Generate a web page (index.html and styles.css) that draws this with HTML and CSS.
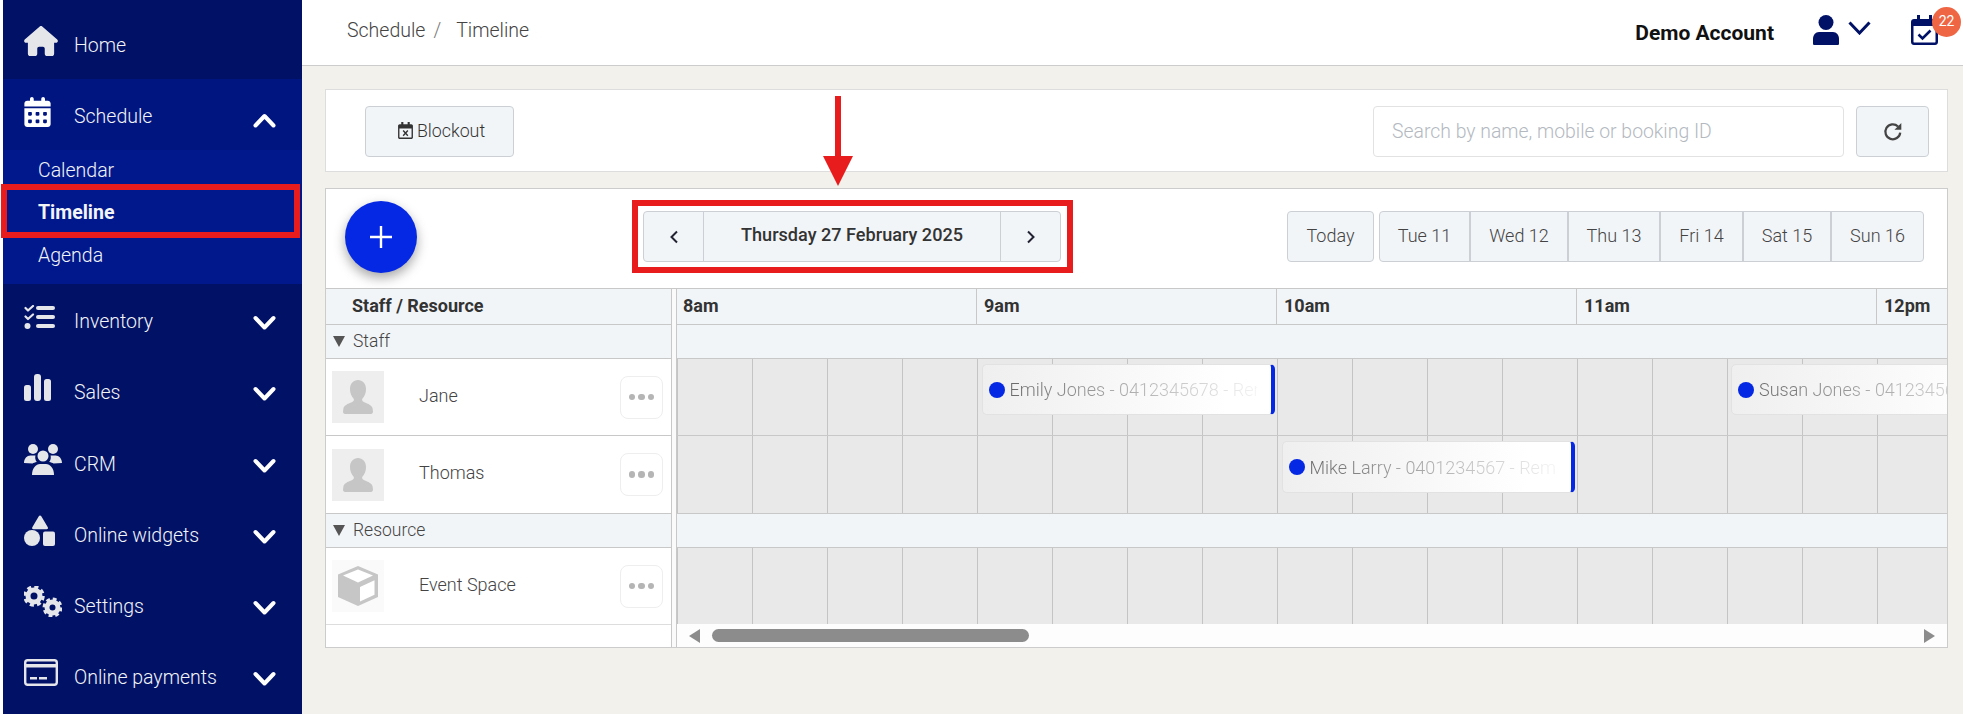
FILE: index.html
```html
<!DOCTYPE html>
<html lang="en">
<head>
<meta charset="utf-8">
<title>Schedule / Timeline</title>
<link rel="stylesheet" href="styles.css">
</head>
<body>
<aside class="sidebar">
  <a class="nav-row nav-home">
    <span class="nav-icon"><svg width="34" height="30" viewBox="0 0 576 512"><path fill="#e4e6ea" d="M575.8 255.5c0 18-15 32.1-32 32.1h-32l.7 160.2c0 2.7-.2 5.4-.5 8.1V472c0 22.1-17.9 40-40 40H456c-1.1 0-2.2 0-3.3-.1c-1.4 .1-2.8 .1-4.2 .1H416 392c-22.1 0-40-17.9-40-40V448 384c0-17.7-14.3-32-32-32H256c-17.7 0-32 14.3-32 32v64 24c0 22.1-17.9 40-40 40H160 128.1c-1.5 0-3-.1-4.5-.2c-1.2 .1-2.4 .2-3.6 .2H104c-22.1 0-40-17.9-40-40V360c0-.9 0-1.9 .1-2.8V287.6H32c-18 0-32-14-32-32.1c0-9 3-17 10-24L266.4 8c7-7 15-8 22-8s15 2 21 7L564.8 231.5c8 7 12 15 11 24z"/></svg></span>
    <span class="nav-label">Home</span>
  </a>
  <a class="nav-row nav-open">
    <span class="nav-icon"><svg width="27" height="30" viewBox="0 0 448 512"><path fill="#fff" d="M128 0c17.7 0 32 14.3 32 32V64H288V32c0-17.7 14.3-32 32-32s32 14.3 32 32V64h48c26.5 0 48 21.5 48 48v48H0V112C0 85.5 21.5 64 48 64H96V32c0-17.7 14.3-32 32-32zM0 192H448V464c0 26.5-21.5 48-48 48H48c-26.5 0-48-21.5-48-48V192zm64 80v32c0 8.8 7.2 16 16 16h32c8.8 0 16-7.2 16-16V272c0-8.8-7.2-16-16-16H80c-8.8 0-16 7.2-16 16zm128 0v32c0 8.8 7.2 16 16 16h32c8.8 0 16-7.2 16-16V272c0-8.8-7.2-16-16-16H208c-8.8 0-16 7.2-16 16zm144-16c-8.8 0-16 7.2-16 16v32c0 8.8 7.2 16 16 16h32c8.8 0 16-7.2 16-16V272c0-8.8-7.2-16-16-16H336zM64 400v32c0 8.8 7.2 16 16 16h32c8.8 0 16-7.2 16-16V400c0-8.8-7.2-16-16-16H80c-8.8 0-16 7.2-16 16zm144-16c-8.8 0-16 7.2-16 16v32c0 8.8 7.2 16 16 16h32c8.8 0 16-7.2 16-16V400c0-8.8-7.2-16-16-16H208zm112 16v32c0 8.8 7.2 16 16 16h32c8.8 0 16-7.2 16-16V400c0-8.8-7.2-16-16-16H336c-8.8 0-16 7.2-16 16z"/></svg></span>
    <span class="nav-label">Schedule</span>
    <svg class="nav-chev nav-chev-up" width="23" height="15" viewBox="0 0 23 15"><polyline points="2.5,12.5 11.5,3 20.5,12.5" fill="none" stroke="#fff" stroke-width="4" stroke-linecap="round" stroke-linejoin="round"/></svg>
  </a>
  <div class="subnav">
    <a class="sub-item">Calendar</a>
    <a class="sub-item sub-active">Timeline<span class="mark-box mark-nav"></span></a>
    <a class="sub-item">Agenda</a>
  </div>
  <a class="nav-row">
    <span class="nav-icon"><svg width="31" height="24" viewBox="0 0 31 24"><g fill="#e4e6ea"><rect x="12" y="1" width="19" height="4" rx="2"/><rect x="12" y="10" width="19" height="4" rx="2"/><rect x="12" y="19" width="19" height="4" rx="2"/><circle cx="3.5" cy="21" r="3"/></g><g fill="none" stroke="#e4e6ea" stroke-width="2.2" stroke-linecap="round" stroke-linejoin="round"><polyline points="1.5,3 4,5.5 9,1"/><polyline points="1.5,11.5 4,14 9,9.5"/></g></svg></span>
    <span class="nav-label">Inventory</span>
    <svg class="nav-chev" width="23" height="15" viewBox="0 0 23 15"><polyline points="2.5,3 11.5,12.5 20.5,3" fill="none" stroke="#fff" stroke-width="4" stroke-linecap="round" stroke-linejoin="round"/></svg>
  </a>
  <a class="nav-row">
    <span class="nav-icon"><svg width="27" height="27" viewBox="0 0 27 27"><g fill="#e4e6ea"><rect x="0" y="11" width="7" height="16" rx="2.5"/><rect x="10" y="0" width="7" height="27" rx="3"/><rect x="20" y="5" width="7" height="22" rx="2.5"/></g></svg></span>
    <span class="nav-label">Sales</span>
    <svg class="nav-chev" width="23" height="15" viewBox="0 0 23 15"><polyline points="2.5,3 11.5,12.5 20.5,3" fill="none" stroke="#fff" stroke-width="4" stroke-linecap="round" stroke-linejoin="round"/></svg>
  </a>
  <a class="nav-row">
    <span class="nav-icon"><svg width="38" height="31" viewBox="0 0 38 31"><g fill="#e4e6ea"><circle cx="9" cy="5" r="5"/><circle cx="29" cy="5" r="5"/><circle cx="19" cy="12" r="5.5"/><path d="M0 19c0-4.500 3-7.500 6.500-7.500h5c-.6 1.800-.3 4.600 1.300 6.500-2 .4-3.300 1-4.300 1.500z"/><path d="M38 19c0-4.500-3-7.500-6.500-7.500h-5c.6 1.800.3 4.600-1.300 6.500 2 .4 3.300 1 4.300 1.500z"/><path d="M8 31c0-7 4-11 8-11h6c4 0 8 4 8 11z"/></g></svg></span>
    <span class="nav-label">CRM</span>
    <svg class="nav-chev" width="23" height="15" viewBox="0 0 23 15"><polyline points="2.5,3 11.5,12.5 20.5,3" fill="none" stroke="#fff" stroke-width="4" stroke-linecap="round" stroke-linejoin="round"/></svg>
  </a>
  <a class="nav-row">
    <span class="nav-icon"><svg width="31" height="31" viewBox="0 0 31 31"><g fill="#e4e6ea"><path d="M16 0.500c.6 0 1 .3 1.300.8l6.500 11c.5 1 0 2-1.200 2H9.500c-1.200 0-1.700-1-1.200-2l6.500-11c.3-.5.700-.8 1.200-.8z"/><circle cx="8" cy="23" r="8"/><rect x="19" y="16.500" width="12" height="14.500" rx="2"/></g></svg></span>
    <span class="nav-label">Online widgets</span>
    <svg class="nav-chev" width="23" height="15" viewBox="0 0 23 15"><polyline points="2.5,3 11.5,12.5 20.5,3" fill="none" stroke="#fff" stroke-width="4" stroke-linecap="round" stroke-linejoin="round"/></svg>
  </a>
  <a class="nav-row">
    <span class="nav-icon"><svg width="38" height="31" viewBox="0 0 38 31"><g fill="none" stroke="#e4e6ea"><circle cx="10" cy="10" r="6" stroke-width="5"/><circle cx="10" cy="10" r="9" stroke-width="3.500" stroke-dasharray="4 3.070"/><circle cx="28.500" cy="21.500" r="5.500" stroke-width="5"/><circle cx="28.500" cy="21.500" r="8.300" stroke-width="3.300" stroke-dasharray="3.700 2.820"/></g></svg></span>
    <span class="nav-label">Settings</span>
    <svg class="nav-chev" width="23" height="15" viewBox="0 0 23 15"><polyline points="2.5,3 11.5,12.5 20.5,3" fill="none" stroke="#fff" stroke-width="4" stroke-linecap="round" stroke-linejoin="round"/></svg>
  </a>
  <a class="nav-row">
    <span class="nav-icon"><svg width="34" height="27" viewBox="0 0 34 27"><rect x="1.200" y="1.200" width="31.600" height="24.600" rx="2.500" fill="none" stroke="#e4e6ea" stroke-width="2.400"/><rect x="1" y="5" width="32" height="3.500" fill="#e4e6ea"/><rect x="6" y="18" width="7" height="2.500" fill="#e4e6ea"/><rect x="15" y="18" width="8" height="2.500" fill="#e4e6ea"/></svg></span>
    <span class="nav-label">Online payments</span>
    <svg class="nav-chev" width="23" height="15" viewBox="0 0 23 15"><polyline points="2.5,3 11.5,12.5 20.5,3" fill="none" stroke="#fff" stroke-width="4" stroke-linecap="round" stroke-linejoin="round"/></svg>
  </a>
</aside>

<div class="main">
  <header class="topbar">
    <nav class="crumbs"><span>Schedule</span><span class="crumb-sep">/</span><span>Timeline</span></nav>
    <strong class="account">Demo Account</strong>
    <svg class="user-icon" width="26" height="30" viewBox="0 0 26 30"><circle cx="13" cy="7.500" r="7.500" fill="#001166"/><path fill="#001166" d="M6 17h14c3.500 0 6 3 6 7v4.500c0 1-.6 1.500-1.500 1.500h-23c-.9 0-1.500-.5-1.500-1.500V24c0-4 2.500-7 6-7z"/></svg>
    <svg class="user-chev" width="23" height="14" viewBox="0 0 23 14"><polyline points="1.500,1.500 11.500,12 21.500,1.500" fill="none" stroke="#001166" stroke-width="3"/></svg>
    <div class="cal-alert">
      <svg width="27" height="30" viewBox="0 0 27 30"><path fill="#001166" d="M6 0h3v4h9V0h3v4h3c1.700 0 3 1.300 3 3v20c0 1.700-1.300 3-3 3H3c-1.700 0-3-1.300-3-3V7c0-1.700 1.300-3 3-3h3zM2.500 11v16c0 .3.200.5.500.5h21c.3 0 .5-.2.500-.5V11z"/><polyline points="7.500,19.500 11.500,23.500 19.500,15.500" fill="none" stroke="#001166" stroke-width="2.600"/></svg>
      <span class="badge">22</span>
    </div>
  </header>

  <main class="content">
    <section class="card toolbar">
      <button class="btn btn-blockout"><svg width="15" height="17" viewBox="0 0 14 16"><path fill="#333" d="M3 0h2v2h4V0h2v2h1.500C13.300 2 14 2.700 14 3.500v11c0 .8-.7 1.500-1.500 1.500h-11C.7 16 0 15.300 0 14.500v-11C0 2.700.7 2 1.500 2H3zM1.300 6v8.300c0 .2.200.4.400.4h10.600c.2 0 .4-.2.400-.4V6z"/><path d="M4.800 8l4.400 5M9.200 8l-4.400 5" stroke="#333" stroke-width="1.300"/></svg>Blockout</button>
      <div class="search">Search by name, mobile or booking ID</div>
      <button class="btn btn-refresh" aria-label="Refresh"><svg width="20" height="20" viewBox="0 0 18 18"><path d="M15.500 9.500A6.700 6.700 0 1 1 13.500 4" fill="none" stroke="#444" stroke-width="2"/><path d="M16.500 0.800v6.200h-6.200z" fill="#444"/></svg></button>
    </section>

    <section class="card board">
      <div class="board-bar">
        <button class="fab" aria-label="Add"><svg width="22" height="22" viewBox="0 0 22 22"><path d="M11 0v22M0 11h22" stroke="#fff" stroke-width="2.400"/></svg></button>
        <div class="date-nav">
          <span class="mark-box mark-date"></span>
          <button class="seg seg-arrow" aria-label="Previous"><svg width="10" height="14" viewBox="0 0 10 14"><polyline points="8,1.500 2.500,7 8,12.500" fill="none" stroke="#223" stroke-width="2"/></svg></button>
          <button class="seg seg-date">Thursday 27 February 2025</button>
          <button class="seg seg-arrow" aria-label="Next"><svg width="10" height="14" viewBox="0 0 10 14"><polyline points="2,1.500 7.500,7 2,12.500" fill="none" stroke="#223" stroke-width="2"/></svg></button>
        </div>
        <button class="btn btn-today">Today</button>
        <div class="days">
          <button class="day day-tue">Tue 11</button>
          <button class="day day-wed">Wed 12</button>
          <button class="day day-thu">Thu 13</button>
          <button class="day day-fri">Fri 14</button>
          <button class="day day-sat">Sat 15</button>
          <button class="day day-sun">Sun 16</button>
        </div>
      </div>

      <div class="table">
        <div class="res-col">
          <div class="res-head">Staff / Resource</div>
          <div class="group"><span class="tri"></span>Staff</div>
          <div class="res h77">
            <div class="avatar"><svg width="30" height="34" viewBox="0 0 30 34"><path fill="#c6c6c6" d="M15 0c4.500 0 8 3.500 8 9 0 4-1.500 7.500-3.500 9.500-.6.700-.5 2.200.5 3 3 1.800 8.500 3 9.500 6.500l.5 3.500c0 1.500-.8 2.500-2 2.500H2c-1.200 0-2-1-2-2.500l.5-3.500c1-3.500 6.500-4.700 9.500-6.500 1-.8 1.100-2.300.5-3C8.500 16.500 7 13 7 9c0-5.500 3.500-9 8-9z"/></svg></div>
            <span class="res-name">Jane</span>
            <button class="more" aria-label="More"><i></i><i></i><i></i></button>
          </div>
          <div class="res h78">
            <div class="avatar"><svg width="30" height="34" viewBox="0 0 30 34"><path fill="#c6c6c6" d="M15 0c4.500 0 8 3.500 8 9 0 4-1.500 7.500-3.500 9.500-.6.700-.5 2.200.5 3 3 1.800 8.500 3 9.500 6.500l.5 3.500c0 1.500-.8 2.500-2 2.500H2c-1.200 0-2-1-2-2.500l.5-3.500c1-3.500 6.500-4.700 9.500-6.500 1-.8 1.100-2.300.5-3C8.500 16.500 7 13 7 9c0-5.500 3.500-9 8-9z"/></svg></div>
            <span class="res-name">Thomas</span>
            <button class="more" aria-label="More"><i></i><i></i><i></i></button>
          </div>
          <div class="group"><span class="tri"></span>Resource</div>
          <div class="res h77 res-last">
            <div class="avatar avatar-box"><svg width="42" height="42" viewBox="0 0 42 42"><path d="M21 1L41 9.500v22.500L21 41 1 32V9.500z" fill="#c6c6c6"/><path d="M23 22l14.500-6.800V29.700L23 36.500z" fill="#fff"/><path d="M21 4.500L36 10.500 21 17.500 6 10.500z" fill="#fff"/></svg></div>
            <span class="res-name">Event Space</span>
            <button class="more" aria-label="More"><i></i><i></i><i></i></button>
          </div>
        </div>
        <div class="splitter"></div>
        <div class="time-col">
          <div class="hours">
            <div class="hour">8am</div>
            <div class="hour">9am</div>
            <div class="hour">10am</div>
            <div class="hour">11am</div>
            <div class="hour">12pm</div>
          </div>
          <div class="band"></div>
          <div class="cells h77">
            <div class="event ev-emily"><span class="dot"></span><span class="ev-text">Emily Jones - 0412345678 - Reminder</span></div>
            <div class="event ev-susan"><span class="dot"></span><span class="ev-text">Susan Jones - 0412345678 - Reminder</span></div>
          </div>
          <div class="cells h78">
            <div class="event ev-mike"><span class="dot"></span><span class="ev-text">Mike Larry - 0401234567 - Reminder</span></div>
          </div>
          <div class="band"></div>
          <div class="cells h76"></div>
          <div class="scroller">
            <span class="arrow-left"></span>
            <span class="thumb"></span>
            <span class="arrow-right"></span>
          </div>
        </div>
      </div>
    </section>
  </main>
</div>

<svg class="red-arrow" width="30" height="90" viewBox="0 0 30 90"><path fill="#e81c1c" d="M12 0h6v60h12L15 90 0 60h12z"/></svg>
</body>
</html>
```

FILE: styles.css
```css
* { box-sizing: border-box; }

html, body {
  margin: 0;
  height: 714px;
  overflow: hidden;
}

body {
  display: flex;
  position: relative;
  background: #fff;
  font-family: "Roboto", "Liberation Sans", sans-serif;
  font-weight: 300;
  font-size: 18px;
  color: #444;
}

button {
  font: inherit;
  color: inherit;
  padding: 0;
  margin: 0;
}

/* Sidebar */
.sidebar {
  width: 299px;
  margin-left: 3px;
  flex: none;
  background: #001166;
  color: #f3f4f6;
}

.nav-row {
  display: flex;
  align-items: flex-start;
  height: 71.2px;
  padding-left: 21px;
}

.nav-home {
  height: 79px;
  padding-top: 8px;
}

.nav-open {
  background: #00157f;
}

.nav-icon {
  width: 50px;
  height: 33px;
  margin-top: 16px;
  flex: none;
  display: flex;
  align-items: center;
}

.nav-label {
  margin-top: 26px;
  line-height: 24px;
  font-size: 19.500px;
}

.nav-chev {
  margin: 31px 26px 0 auto;
}

.nav-chev-up {
  margin-top: 34px;
}

.subnav {
  height: 134px;
  background: #00188c;
}

.sub-item {
  display: block;
  position: relative;
  height: 42.500px;
  line-height: 42px;
  padding-left: 35px;
  font-size: 19.500px;
}

.sub-item:first-child {
  height: 42px;
}

.sub-active {
  font-weight: 700;
}

.mark-box {
  position: absolute;
  border: 6px solid #e81c1c;
  pointer-events: none;
}

.mark-nav {
  left: -2px;
  top: -8px;
  width: 299px;
  height: 54px;
}

/* Main */
.main {
  flex: 1;
  min-width: 0;
  display: flex;
  flex-direction: column;
  background: #f2f1ec;
}

.topbar {
  height: 66px;
  flex: none;
  display: flex;
  align-items: flex-start;
  background: #fff;
  border-bottom: 1px solid #ccc;
  padding-left: 45px;
}

.crumbs {
  display: flex;
  margin-top: 19px;
  line-height: 24px;
  font-size: 19.500px;
  color: #444;
}

.crumb-sep {
  margin: 0 15px 0 8px;
  color: #777;
}

.account {
  margin-left: auto;
  margin-top: 21px;
  line-height: 24px;
  font-weight: 700;
  font-size: 21px;
  color: #111;
}

.user-icon {
  margin: 15px 0 0 39px;
}

.user-chev {
  margin: 21px 0 0 9px;
}

.cal-alert {
  position: relative;
  margin: 15px 25px 0 40px;
  width: 27px;
  height: 30px;
}

.badge {
  position: absolute;
  left: 21px;
  top: -8px;
  width: 29px;
  height: 30px;
  border-radius: 50%;
  background: #ee6644;
  color: #fff;
  font-size: 14px;
  font-weight: 400;
  line-height: 29px;
  text-align: center;
}

.content {
  padding: 23px 15px 0 23px;
}

.card {
  background: #fff;
  border: 1px solid #ddd;
}

.toolbar {
  height: 83px;
  display: flex;
  align-items: center;
  padding: 2px 18px 0 39px;
}

.btn {
  background: #f2f5f8;
  border: 1px solid #ccd0d4;
  border-radius: 4px;
  height: 51px;
  display: flex;
  align-items: center;
  justify-content: center;
  font-weight: 400;
}

.btn-blockout {
  width: 149px;
  gap: 4px;
  padding: 0 0 2px 4px;
  font-size: 17.800px;
  font-weight: 300;
  color: #333;
}

.search {
  margin-left: auto;
  width: 471px;
  height: 51px;
  border: 1px solid #e2e2e2;
  border-radius: 4px;
  padding-left: 18px;
  line-height: 50px;
  font-size: 19.400px;
  color: #b4b9bf;
}

.btn-refresh {
  width: 73px;
  margin-left: 12px;
}

/* Board */
.board {
  margin-top: 16px;
  height: 460px;
  border-color: #ccc;
}

.board-bar {
  height: 99px;
  display: flex;
  align-items: flex-start;
  padding: 22px 23px 0 19px;
}

.fab {
  width: 72px;
  height: 72px;
  margin-top: -10px;
  flex: none;
  border: 0;
  border-radius: 50%;
  background: #0528e4;
  box-shadow: 0 5px 12px rgba(0, 0, 0, .35);
  display: flex;
  align-items: center;
  justify-content: center;
}

.date-nav {
  position: relative;
  margin-left: 226px;
  width: 418px;
  height: 51px;
  display: flex;
  background: #f2f5f8;
  border: 1px solid #ccd0d4;
  border-radius: 4px;
}

.mark-date {
  left: -12px;
  top: -12px;
  width: 441px;
  height: 73px;
}

.seg {
  background: transparent;
  border: 0;
  height: 100%;
  display: flex;
  align-items: center;
  justify-content: center;
}

.seg-arrow {
  flex: 1;
}

.seg-date {
  width: 298px;
  flex: none;
  border-left: 1px solid #ccd0d4;
  border-right: 1px solid #ccd0d4;
  font-weight: 500;
  font-size: 18.100px;
  color: #333;
  padding-bottom: 4px;
}

.btn-today {
  margin-left: auto;
  width: 87px;
  padding-bottom: 2px;
  font-weight: 300;
}

.days {
  margin-left: 5px;
  display: flex;
  width: 545px;
  height: 51px;
  background: #f2f5f8;
  border: 1px solid #ccd0d4;
  border-radius: 4px;
}

.day {
  background: transparent;
  border: 0;
  border-right: 2px solid #ccd0d4;
  height: 100%;
  padding-bottom: 2px;
  font-weight: 300;
}

.day-tue { width: 91px; }
.day-wed { width: 98px; }
.day-thu { width: 92px; }
.day-fri { width: 83px; }
.day-sat { width: 88px; }
.day-sun { flex: 1; border-right: 0; }

/* Table */
.table {
  display: flex;
  border-top: 1px solid #c8c8c8;
  height: 359px;
}

.res-col {
  width: 345px;
  flex: none;
}

.res-head {
  height: 36px;
  line-height: 33px;
  padding-left: 26px;
  background: #f2f5f8;
  border-bottom: 1px solid #c8c8c8;
  font-weight: 700;
  font-size: 18px;
  color: #333;
}

.group {
  height: 34px;
  display: flex;
  align-items: center;
  background: #f2f5f8;
  border-bottom: 1px solid #c8c8c8;
  padding: 0 0 2px 7px;
  font-size: 17.500px;
}

.tri {
  width: 0;
  height: 0;
  margin: 2px 8px 0 0;
  border-left: 6px solid transparent;
  border-right: 6px solid transparent;
  border-top: 11px solid #555;
}

.res {
  display: flex;
  align-items: center;
  padding: 0 8px 0 6px;
  border-bottom: 1px solid #c8c8c8;
}

.res-last {
  border-bottom-color: #ddd;
}

.h77 { height: 77px; }
.h78 { height: 78px; }
.h76 { height: 76px; }

.avatar {
  width: 52px;
  height: 52px;
  flex: none;
  background: #eee;
  display: flex;
  align-items: center;
  justify-content: center;
}

.avatar-box {
  background: #fafafa;
}

.res-name {
  margin-left: 35px;
  margin-bottom: 3px;
  font-size: 18px;
}

.res.h78 .res-name {
  margin-bottom: 5px;
}

.more {
  margin-left: auto;
  width: 43px;
  height: 43px;
  background: #fff;
  border: 1px solid #eee;
  border-radius: 8px;
  display: flex;
  align-items: center;
  justify-content: center;
  gap: 3px;
}

.more i {
  width: 6.500px;
  height: 6.500px;
  border-radius: 50%;
  background: #b5b5b5;
}

.splitter {
  width: 6px;
  flex: none;
  border-left: 1px solid #c8c8c8;
  border-right: 1px solid #c8c8c8;
  background: #fafafa;
}

.time-col {
  width: 1270px;
  flex: none;
  overflow: hidden;
}

.hours {
  height: 36px;
  display: flex;
  background: #f2f5f8;
  border-bottom: 1px solid #c8c8c8;
}

.hour {
  width: 300px;
  flex: none;
  border-right: 1px solid #c8c8c8;
  padding-left: 7px;
  line-height: 33px;
  font-weight: 700;
  font-size: 18px;
  color: #333;
}

.hour:first-child {
  padding-left: 6px;
}

.band {
  height: 34px;
  background: #f2f5f8;
  border-bottom: 1px solid #c8c8c8;
}

.cells {
  position: relative;
  border-bottom: 1px solid #c8c8c8;
  background-color: #e9e9e9;
  background-image: linear-gradient(to right, #c4c4c4 1px, transparent 1px);
  background-size: 75px 100%;
}

.cells.h76 {
  border-bottom: 0;
}

.event {
  position: absolute;
  top: 5px;
  height: 51px;
  width: 293.500px;
  display: flex;
  align-items: center;
  padding: 0 14px 0 6px;
  overflow: hidden;
  background: linear-gradient(to right, #efefef, #fff 85%);
  border: 1px solid #e2e2e2;
  border-radius: 5px;
  font-size: 18px;
  white-space: nowrap;
}

.ev-emily { left: 304.500px; }
.ev-susan { left: 1054px; width: 300px; }
.ev-mike { left: 604.500px; height: 52px; }

.ev-emily,
.ev-mike {
  border-right: 4px solid #0528e4;
}

.dot {
  width: 16px;
  height: 16px;
  border-radius: 50%;
  background: #0528e4;
  margin-right: 5px;
  flex: none;
}

.ev-text {
  min-width: 0;
  overflow: hidden;
  background: linear-gradient(to right, #6a6a6a, #f4f4f4 100%);
  -webkit-background-clip: text;
  background-clip: text;
  color: transparent;
}

.scroller {
  height: 23px;
  display: flex;
  align-items: center;
  background: #fdfdfd;
  padding: 0 12px;
}

.arrow-left {
  width: 0;
  height: 0;
  border-top: 7px solid transparent;
  border-bottom: 7px solid transparent;
  border-right: 11px solid #8c8c8c;
}

.thumb {
  margin-left: 12px;
  width: 317px;
  height: 13px;
  border-radius: 7px;
  background: #8c8c8c;
}

.arrow-right {
  margin-left: auto;
  width: 0;
  height: 0;
  border-top: 7px solid transparent;
  border-bottom: 7px solid transparent;
  border-left: 11px solid #8c8c8c;
}

.red-arrow {
  position: absolute;
  left: 823px;
  top: 96px;
}
```
